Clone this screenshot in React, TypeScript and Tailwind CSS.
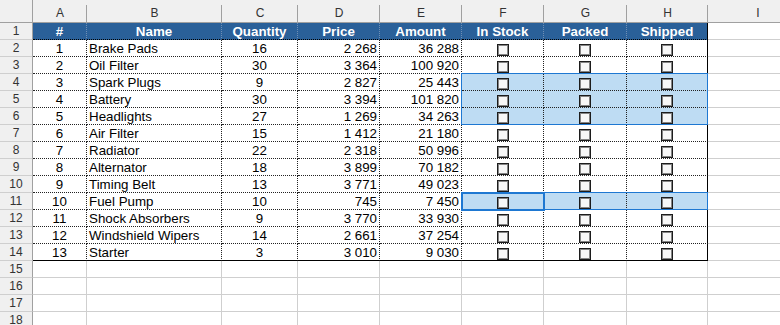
import { Fragment } from "react";

interface Part {
    n: number,
    name: string,
    qty: number,
    price: string,
    amount: string,
}

const parts: Part[] = [
    { n: 1, name: "Brake Pads", qty: 16, price: "2 268", amount: "36 288" },
    { n: 2, name: "Oil Filter", qty: 30, price: "3 364", amount: "100 920" },
    { n: 3, name: "Spark Plugs", qty: 9, price: "2 827", amount: "25 443" },
    { n: 4, name: "Battery", qty: 30, price: "3 394", amount: "101 820" },
    { n: 5, name: "Headlights", qty: 27, price: "1 269", amount: "34 263" },
    { n: 6, name: "Air Filter", qty: 15, price: "1 412", amount: "21 180" },
    { n: 7, name: "Radiator", qty: 22, price: "2 318", amount: "50 996" },
    { n: 8, name: "Alternator", qty: 18, price: "3 899", amount: "70 182" },
    { n: 9, name: "Timing Belt", qty: 13, price: "3 771", amount: "49 023" },
    { n: 10, name: "Fuel Pump", qty: 10, price: "745", amount: "7 450" },
    { n: 11, name: "Shock Absorbers", qty: 9, price: "3 770", amount: "33 930" },
    { n: 12, name: "Windshield Wipers", qty: 14, price: "2 661", amount: "37 254" },
    { n: 13, name: "Starter", qty: 3, price: "3 010", amount: "9 030" },
];

const letters = ["A", "B", "C", "D", "E", "F", "G", "H", "I"];
const widths = ["w-[54px]", "w-[135px]", "w-[76px]", "w-[82px]", "w-[82px]", "w-[82px]", "w-[83px]", "w-[81px]", "w-[100px]"];
const headers = ["#", "Name", "Quantity", "Price", "Amount", "In Stock", "Packed", "Shipped"];

function Checkbox(){
    return <div className="w-[12px] h-[12px] border border-[#1c1c1c] bg-[#f7f7f7] shadow-[inset_0_0_0_1px_#858585]" />
}

function RowHead({ n }: { n: number }){
    return (
        <div className="w-[33px] h-[17px] shrink-0 bg-[#f0f0f0] border-r border-b border-r-[#a0a0a0] border-b-[#cfcfcf] flex items-end justify-center leading-[15px] text-[12px] text-[#333]">
            {n}
        </div>
    )
}

export default function App(){

    const selected = (row: number) => (row >= 4 && row <= 6) || row === 11;

    return(
        <div className="relative w-[780px] h-[325px] overflow-hidden bg-white text-black font-['Liberation_Sans',Arial,sans-serif] text-[13.33px]">

            {/* column letters */}
            <div className="flex h-[23px]">
                <div className="w-[33px] shrink-0 bg-[#f0f0f0] border-r border-b border-[#a0a0a0]" />
                {letters.map((l, i) => (
                    <div key={l} className={`${widths[i]} relative shrink-0 bg-[#f0f0f0] border-b border-[#a0a0a0] flex items-center justify-center pt-[3px] text-[12px] text-[#333]`}>
                        {l}
                        <span className="absolute right-0 top-[5px] bottom-0 w-px bg-[#a0a0a0]" />
                    </div>
                ))}
                <div className="flex-1 bg-[#f0f0f0] border-b border-[#a0a0a0]" />
            </div>

            {/* header row */}
            <div className="flex">
                <RowHead n={1} />
                {headers.map((h, i) => (
                    <div key={h} className={`${widths[i]} h-[17px] shrink-0 bg-[#2a6099] border-r border-b border-r-[#6f8fb5] border-b-black border-dotted ${i === 7 ? "[border-right-style:solid] border-r-black" : ""} flex items-end justify-center leading-[15px] font-bold text-white`}>
                        {h}
                    </div>
                ))}
                <div className="flex-1 h-[17px] border-b border-[#cfcfcf]" />
            </div>

            {/* data rows */}
            {parts.map((p, idx) => {
                const row = idx + 2;
                const last = row === 14;
                const cell = `h-[17px] shrink-0 border-r border-b border-dotted border-[#222] flex items-end leading-[15px] ${last ? "[border-bottom-style:solid] border-b-black" : ""}`;
                const check = `${cell} justify-center ${selected(row) ? "bg-[#bedcf3]" : ""}`;
                return (
                    <div key={p.n} className="flex">
                        <RowHead n={row} />
                        <div className={`${widths[0]} ${cell} justify-center`}>{p.n}</div>
                        <div className={`${widths[1]} ${cell} pl-[2px]`}>{p.name}</div>
                        <div className={`${widths[2]} ${cell} justify-center`}>{p.qty}</div>
                        <div className={`${widths[3]} ${cell} justify-end pr-[2px]`}>{p.price}</div>
                        <div className={`${widths[4]} ${cell} justify-end pr-[2px]`}>{p.amount}</div>
                        <div className={`${widths[5]} ${check}`}><Checkbox /></div>
                        <div className={`${widths[6]} ${check}`}><Checkbox /></div>
                        <div className={`${widths[7]} ${check} [border-right-style:solid] border-r-black`}><Checkbox /></div>
                        <div className="flex-1 h-[17px] border-b border-[#cfcfcf]" />
                    </div>
                )
            })}

            {/* empty rows */}
            {[15, 16, 17, 18].map(row => (
                <div key={row} className="flex">
                    <RowHead n={row} />
                    {widths.map((w, i) => (
                        <Fragment key={i}>
                            <div className={`${w} h-[17px] shrink-0 border-r border-b border-[#cfcfcf]`} />
                        </Fragment>
                    ))}
                    <div className="flex-1 h-[17px] border-b border-[#cfcfcf]" />
                </div>
            ))}

            {/* selection outlines */}
            <div className="absolute left-[461px] top-[73px] w-[247px] h-[52px] border border-[#1e78d2] pointer-events-none" />
            <div className="absolute left-[461px] top-[192px] w-[247px] h-[18px] border border-[#1e78d2] pointer-events-none" />
            <div className="absolute left-[461px] top-[192px] w-[84px] h-[19px] border-2 border-[#1e78d2] pointer-events-none" />
        </div>
    )
}
